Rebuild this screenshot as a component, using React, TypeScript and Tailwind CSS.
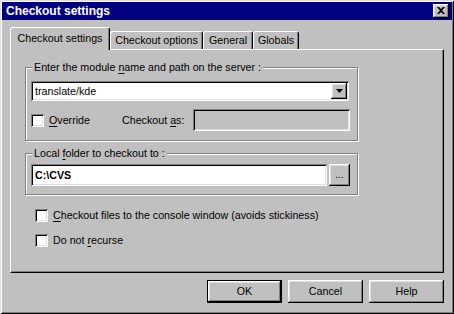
import React from "react";

const raised =
  "shadow-[inset_-1px_-1px_0_#000,inset_1px_1px_0_#fff,inset_-2px_-2px_0_#808080,inset_2px_2px_0_#dfdfdf]";
const sunken =
  "shadow-[inset_1px_1px_0_#808080,inset_-1px_-1px_0_#fff,inset_2px_2px_0_#000,inset_-2px_-2px_0_#dfdfdf]";

const U = ({ children }: { children: React.ReactNode }) => (
  <span className="underline underline-offset-[2px] decoration-1">{children}</span>
);

const CheckBox = () => <div className={`w-[13px] h-[13px] bg-white shrink-0 ${sunken}`} />;

const Group = ({ label, children, className }: { label: React.ReactNode; children: React.ReactNode; className?: string }) => (
  <fieldset
    className={`w-[333px] border border-[#808080] pl-[5px] pr-[7px] shadow-[inset_1px_1px_0_#fff,1px_1px_0_#fff] ${className ?? ""}`}
  >
    <legend className="ml-[1px] px-[2px] leading-[13px] bg-[#c0c0c0]">{label}</legend>
    {children}
  </fieldset>
);

const Button = ({ label, isDefault }: { label: string; isDefault?: boolean }) => (
  <div
    className={`w-[75px] h-[23px] flex items-center justify-center ${
      isDefault ? "border border-black" : ""
    }`}
  >
    <div className={`w-full h-full flex items-center justify-center ${raised}`}>{label}</div>
  </div>
);

const Tab = ({ label, active, width }: { label: string; active?: boolean; width: string }) => (
  <div
    className={`${width} flex items-center justify-center rounded-t-[3px] border-t border-l border-white border-r border-r-black bg-[#c0c0c0] shadow-[inset_-1px_0_0_#808080] ${
      active ? "h-[23px] relative z-10 mb-[-1px]" : "h-[18px]"
    }`}
  >
    <span className={active ? "pb-[2px]" : ""}>{label}</span>
  </div>
);

export default function App() {
  return (
    <div
      className="w-[454px] h-[314px] bg-[#c0c0c0] p-[2px] text-black text-[10.7px] shadow-[inset_1px_1px_0_#dfdfdf,inset_-1px_-1px_0_#000,inset_2px_2px_0_#fff,inset_-2px_-2px_0_#808080]"
      style={{ fontFamily: '"Liberation Sans", Arial, sans-serif' }}
    >
      <div className="h-[18px] bg-[#000080] flex items-center justify-between pl-[4px] pr-[3px]">
        <span className="text-white font-bold text-[12px] leading-none">Checkout settings</span>
        <div className={`w-[16px] h-[14px] flex items-center justify-center bg-[#c0c0c0] ${raised}`}>
          <svg width="8" height="7" viewBox="0 0 8 7" className="mb-[1px]">
            <path d="M0 0h2l2 2 2-2h2L5 3.5 8 7H6L4 5 2 7H0l3-3.5z" fill="#000" />
          </svg>
        </div>
      </div>

      <div className="ml-[8px] mt-[7px] h-[22px] flex items-end">
        <Tab label="Checkout settings" active width="w-[100px]" />
        <Tab label="Checkout options" width="w-[93px]" />
        <Tab label="General" width="w-[50px]" />
        <Tab label="Globals" width="w-[46px]" />
      </div>

      <div className="ml-[8px] w-[434px] h-[224px] border-t border-l border-white border-r border-b border-r-black border-b-black shadow-[inset_-1px_-1px_0_#808080] pl-[14px] pt-[11px]">
        <Group
          label={
            <>
              Enter the module <U>n</U>ame and path on the server :
            </>
          }
          className="pb-[9px]"
        >
          <div className={`mt-[7px] w-[318px] h-[20px] bg-white flex items-center justify-between pl-[4px] pr-[2px] ${sunken}`}>
            <span>translate/kde</span>
            <div className={`w-[16px] h-[16px] bg-[#c0c0c0] flex items-center justify-center ${raised}`}>
              <svg width="7" height="4" viewBox="0 0 7 4">
                <path d="M0 0h7L3.5 4z" fill="#000" />
              </svg>
            </div>
          </div>
          <div className="mt-[8px] flex items-center h-[22px]">
            <CheckBox />
            <span className="ml-[5px] w-[73px]">
              <U>O</U>verride
            </span>
            <span>
              Checkout <U>a</U>s:
            </span>
            <div className={`ml-auto w-[157px] h-[22px] bg-[#c0c0c0] ${sunken}`} />
          </div>
        </Group>

        <Group
          label={
            <>
              Local <U>f</U>older to checkout to :
            </>
          }
          className="mt-[6px] pb-[8px]"
        >
          <div className="mt-[4px] flex items-center gap-[2px]">
            <div className={`w-[296px] h-[22px] bg-white flex items-center pl-[4px] font-bold ${sunken}`}>C:\CVS</div>
            <div className={`w-[21px] h-[22px] flex items-center justify-center ${raised}`}>
              <span className="mt-[-1px] text-[10px]">...</span>
            </div>
          </div>
        </Group>

        <div className="ml-[10px] mt-[14px] flex flex-col gap-[12px]">
          <div className="flex items-center h-[13px]">
            <CheckBox />
            <span className="ml-[5px]">
              <U>C</U>heckout files to the console window (avoids stickiness)
            </span>
          </div>
          <div className="flex items-center h-[13px]">
            <CheckBox />
            <span className="ml-[5px]">
              Do not <U>r</U>ecurse
            </span>
          </div>
        </div>
      </div>

      <div className="ml-[8px] w-[434px] mt-[7px] flex justify-end gap-[6px]">
        <Button label="OK" isDefault />
        <Button label="Cancel" />
        <Button label="Help" />
      </div>
    </div>
  );
}
